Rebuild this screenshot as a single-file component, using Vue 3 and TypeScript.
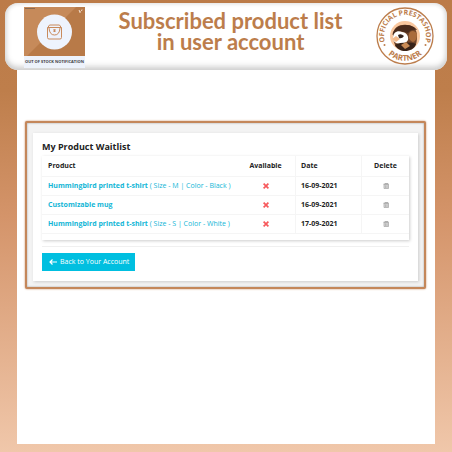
<script setup lang="ts">
interface WaitlistItem {
  id: number
  name: string
  options: string
  date: string
}

const items: WaitlistItem[] = [
  { id: 1, name: 'Hummingbird printed t-shirt', options: '( Size - M | Color - Black )', date: '16-09-2021' },
  { id: 2, name: 'Customizable mug', options: '', date: '16-09-2021' },
  { id: 3, name: 'Hummingbird printed t-shirt', options: '( Size - S | Color - White )', date: '17-09-2021' },
]
</script>

<template>
  <div class="page">
    <header class="banner">
      <div class="module">
        <svg class="module-art" viewBox="0 0 61 49" aria-hidden="true">
          <rect width="61" height="49" fill="#b87a48" />
          <path d="M0 0H52L3 49H0Z" fill="#c68a5a" />
          <rect x="1" y="1" width="10" height="1" fill="#8a6a52" />
          <circle cx="30.500" cy="25" r="17.500" fill="#eef3fd" />
          <g fill="none" stroke="#c98a5c" stroke-width="1">
            <path d="M25.500 18H35.500L37.500 21V30.500Q37.500 32 36 32H25Q23.500 32 23.500 30.500V21Z" />
            <path d="M23.500 20.500H37.500" />
            <path d="M25 21Q25.500 28 30.500 28T36 21" />
            <path d="M29.500 22.500L31.500 24.500M31.500 22.500L29.500 24.500" stroke-width="1.200" />
          </g>
          <path d="M55 3L56 5M58 2.500L57.500 4M55 5H57" stroke="#f3dfd0" stroke-width="1" fill="none" />
        </svg>
        <span class="module-name">OUT OF STOCK NOTIFICATION</span>
      </div>
      <h1>Subscribed product list<br />in user account</h1>
      <svg class="badge" viewBox="0 0 58 58" role="img" aria-label="Official PrestaShop Partner">
        <defs>
          <path id="arc-top" d="M14.200 43.800A21 21 0 1 1 43.800 43.800" />
          <path id="arc-bottom" d="M5.500 37A24.800 24.800 0 0 0 52.500 37" />
        </defs>
        <circle cx="29" cy="29" r="28" fill="#fff" stroke="#bc7d4c" stroke-width="1.300" />
        <circle cx="29" cy="29" r="15" fill="#fac8a0" />
        <path d="M17 27C18 20 24 17 31 18C38 18 41 23 41 29C41 35 40 40 37 41L20 40C18 37 17 31 17 27Z" fill="#70452a" />
        <path d="M16.500 28C17 22 23 18 29 18C35 18 39 20 41 23C37 22 34 23 32 26L24 24Z" fill="#4a2b1c" />
        <path d="M17 31C17 26 21 23 26 25C30 25 33 29 32 33C30 37 24 38 20 36C18 35 17 33 17 31Z" fill="#fff" />
        <path d="M33 27C34 23 39 23 41 27C41 31 40 34 37 35C34 34 32 31 33 27Z" fill="#a96b3c" />
        <path d="M16 32L20 29L24 32L20 35Z" fill="#f2b98b" />
        <path d="M22 28Q25 26 28 29Q26 32 23 31Z" fill="#35251e" />
        <path d="M19 38C24 35 35 35 40 37C38 42 34 44 29 44C25 44 21 42 19 38Z" fill="#382319" />
        <path d="M25 38L30 35L34 39L29 42Z" fill="#c98a55" />
        <circle cx="8.500" cy="38" r="1" fill="#bc7d4c" />
        <circle cx="49.500" cy="38" r="1" fill="#bc7d4c" />
        <text class="badge-text"><textPath href="#arc-top" startOffset="50%" text-anchor="middle">OFFICIAL PRESTASHOP</textPath></text>
        <text class="badge-text badge-partner"><textPath href="#arc-bottom" startOffset="50%" text-anchor="middle">PARTNER</textPath></text>
      </svg>
    </header>

    <main class="sheet">
      <div class="frame">
        <section class="card">
          <h2>My Product Waitlist</h2>
          <div class="table-box">
            <table>
              <thead>
                <tr>
                  <th class="product">Product</th>
                  <th class="available">Available</th>
                  <th class="date">Date</th>
                  <th class="delete">Delete</th>
                </tr>
              </thead>
              <tbody>
                <tr v-for="item in items" :key="item.id">
                  <td class="product">
                    <a href="#"><strong>{{ item.name }}</strong> {{ item.options }}</a>
                  </td>
                  <td class="available">
                    <svg class="icon" viewBox="0 0 6 6" role="img" aria-label="Not available">
                      <path d="M.6 .6L5.400 5.400M5.400 .6L.6 5.400" stroke="#f7595c" stroke-width="1.700" />
                    </svg>
                  </td>
                  <td class="date">{{ item.date }}</td>
                  <td class="delete">
                    <button class="remove" type="button" aria-label="Delete">
                      <svg class="icon" viewBox="0 0 6 6" aria-hidden="true">
                        <path d="M1 1.200H5.500V5.500H1Z" fill="#d8d8d8" stroke="#acacac" stroke-width=".8" />
                        <path d="M.5 1.200H5.500M2 .5H5" stroke="#a4a4a4" stroke-width=".8" />
                        <path d="M2.500 2.300V5M4 2.300V5" stroke="#a4a4a4" stroke-width=".6" />
                      </svg>
                    </button>
                  </td>
                </tr>
              </tbody>
            </table>
          </div>
          <div class="actions">
            <a class="back" href="#">
              <svg class="arrow" viewBox="0 0 8 6" aria-hidden="true">
                <path d="M8 3H1M3.500 .5L1 3L3.500 5.500" fill="none" stroke="#fff" stroke-width="1.200" />
              </svg>
              Back to Your Account
            </a>
          </div>
        </section>
      </div>
    </main>
  </div>
</template>

<style>
body {
  margin: 0;
}
</style>

<style scoped>
.page {
  box-sizing: border-box;
  min-height: 100vh;
  display: flex;
  flex-direction: column;
  padding: 3px 5px 8px;
  background: linear-gradient(#bc7b48 0%, #be7e4b 20%, #d4946a 48%, #f0c7aa 100%);
  font-family: "Open Sans", "Noto Sans", sans-serif;
  color: #232323;
}

.banner {
  display: flex;
  align-items: flex-start;
  justify-content: space-between;
  padding: 4px 13px 2px 19px;
  border-radius: 13px;
  background: #fff;
  box-shadow: inset 0 -3px 6px #ccc, inset 0 0 5px #ddd;
}

.module {
  width: 61px;
  background: #edf2fb;
}

.module-art {
  display: block;
  width: 61px;
  height: 49px;
}

.module-name {
  display: block;
  font-size: 4px;
  line-height: 12px;
  font-weight: 700;
  text-align: center;
  white-space: nowrap;
  color: #3c3c44;
}

h1 {
  margin: 3px 0 0;
  font-family: Lato, "Open Sans", sans-serif;
  font-size: 22px;
  line-height: 21px;
  font-weight: 700;
  text-align: center;
  white-space: nowrap;
  color: #bc7d4b;
}

.badge {
  width: 58px;
  height: 58px;
}

.badge-text {
  font-family: "Open Sans", sans-serif;
  font-size: 7px;
  font-weight: 700;
  fill: #bc7d4c;
}

.badge-partner {
  font-size: 8px;
}

.sheet {
  flex: 1;
  margin: 0 12px;
  padding: 51px 9px 0 8px;
  background: #fff;
}

.frame {
  border: 2px solid #c4875a;
  border-radius: 2px;
  padding: 10px 6px 6px;
  background: #f3f3f3;
  box-shadow: 0 0 2px #c4875a, inset 0 0 2px #999;
}

.card {
  padding: 8px 9px 10px;
  background: #fff;
  box-shadow: 1px 1px 3px #ccc;
}

h2 {
  margin: 0;
  font-size: 9px;
  line-height: 12px;
  font-weight: 700;
}

.table-box {
  margin-top: 3px;
  padding-bottom: 6px;
  box-shadow: 1px 1px 3px #ccc;
}

table {
  width: 100%;
  border-collapse: collapse;
  table-layout: fixed;
  font-size: 7px;
  line-height: 10px;
}

th,
td {
  height: 18px;
  padding: 0 6px;
  border-bottom: 1px solid #f5f5f5;
  text-align: left;
  font-weight: 700;
  white-space: nowrap;
}

th {
  height: 20px;
}

.available,
.delete {
  text-align: center;
  padding: 0;
}

.available {
  width: 59px;
}

.date {
  width: 54px;
  padding: 0 6px 0 5px;
  border-right: 1px solid #f5f5f5;
  border-left: 1px solid #f5f5f5;
}

.delete {
  width: 47px;
}

td a {
  color: #12b6d6;
  font-weight: 400;
  text-decoration: none;
}

td strong {
  font-weight: 700;
}

.icon {
  display: block;
  width: 6px;
  height: 6px;
  margin: 0 auto;
}

.remove {
  display: block;
  margin: 0 auto;
  padding: 0;
  border: 0;
  background: none;
}

.actions {
  display: flex;
  margin-top: 6px;
  padding-top: 6px;
  border-top: 1px solid #f0f0f0;
}

.back {
  display: flex;
  align-items: center;
  gap: 3px;
  height: 18px;
  padding: 0 6px 0 7px;
  background: #00bfe0;
  color: #fff;
  font-size: 7px;
  line-height: 18px;
  text-decoration: none;
}

.arrow {
  width: 8px;
  height: 6px;
}
</style>
